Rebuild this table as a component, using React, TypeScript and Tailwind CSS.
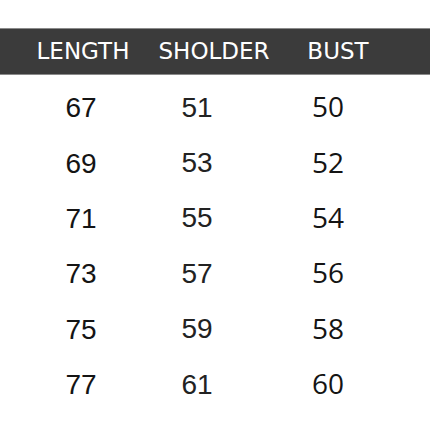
const rows: [string, string, string][] = [
  ['67', '51', '50'],
  ['69', '53', '52'],
  ['71', '55', '54'],
  ['73', '57', '56'],
  ['75', '59', '58'],
  ['77', '61', '60'],
];

export default function App() {
  return (
    <div className="h-[430px] w-[430px] overflow-hidden bg-white pt-[28px]">
      <div className="flex h-[47px] items-center border-y border-[#8a8a8a] bg-[#3b3b3b] text-[23px] leading-none text-white [font-family:'DejaVu_Sans',sans-serif]">
        <div className="flex w-[166px] justify-center">LENGTH</div>
        <div className="flex w-[96px] justify-center whitespace-nowrap">SHOLDER</div>
        <div className="flex w-[152px] justify-center">BUST</div>
      </div>
      <div className="pt-[4px]">
        {rows.map(([a, b, c]) => (
          <div key={a} className="flex h-[55.4px] items-center leading-none text-[#141414]">
            <div className="w-[162px] pt-[3px] text-center text-[28px] [font-family:'Liberation_Sans',sans-serif]">{a}</div>
            <div className="w-[70px] pt-[2px] text-center text-[28px] text-[#222] [font-family:'Liberation_Sans',sans-serif]">{b}</div>
            <div className="w-[192px] pb-[1px] text-center text-[28px] [font-family:'Open_Sans',sans-serif]">{c}</div>
          </div>
        ))}
      </div>
    </div>
  );
}
